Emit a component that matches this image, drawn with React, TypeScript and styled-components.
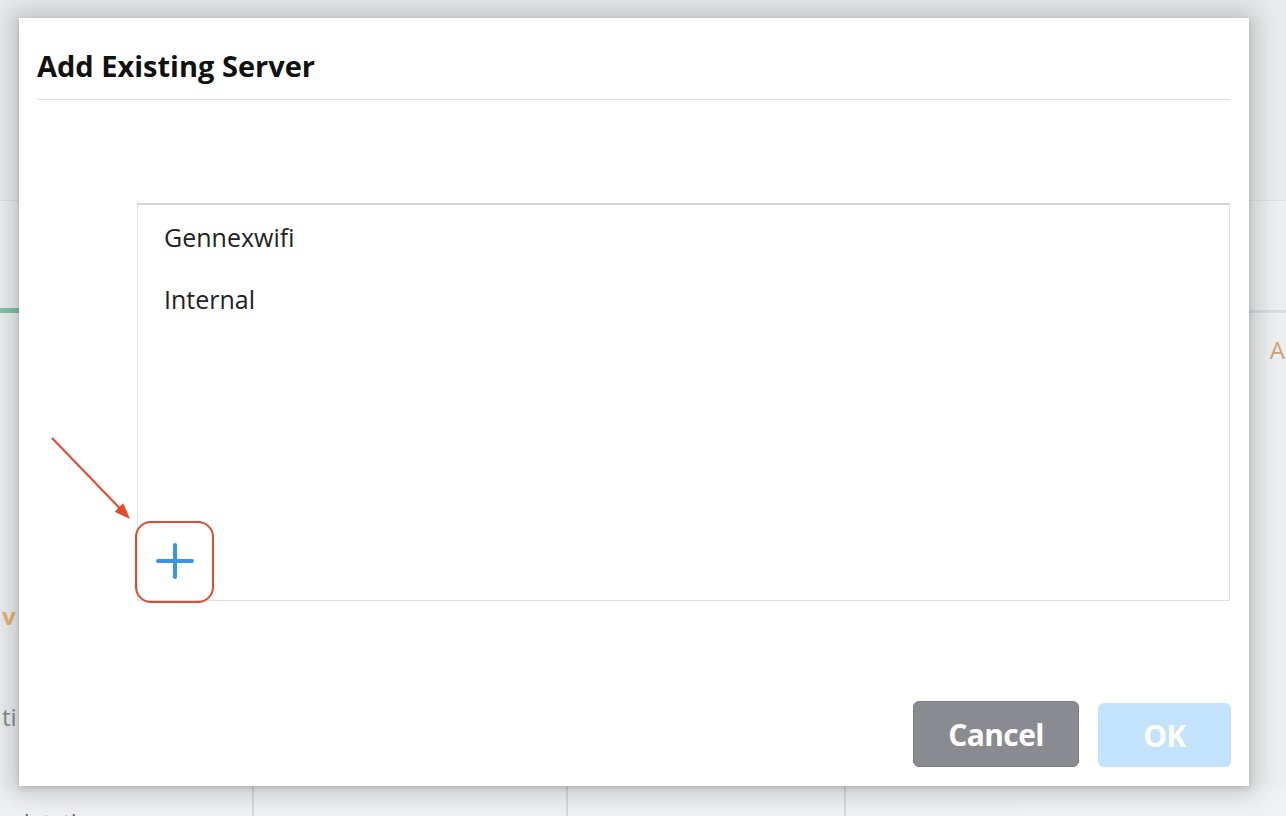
import React from "react";
import styled, { createGlobalStyle } from "styled-components";

const GlobalStyle = createGlobalStyle`
  html, body {
    margin: 0;
    padding: 0;
  }
  body {
    width: 1286px;
    height: 816px;
    overflow: hidden;
    background: #eceef0;
    font-family: "Open Sans", "Noto Sans", sans-serif;
  }
`;

const Screen = styled.div`
  position: relative;
  width: 1286px;
  height: 816px;
  overflow: hidden;
  background: #eceef0;
`;

// faded page behind the modal
const Backdrop = styled.div`
  display: flex;
  flex-direction: column;
  height: 816px;
  opacity: 0.75;
`;

const TopBand = styled.div`
  height: 200px;
  background: #e8eaec;
  border-bottom: 1px solid #d9dcdf;
`;

const TabRow = styled.div`
  height: 112px;
  display: flex;
  align-items: flex-end;
`;

const TabLine = styled.div<{ $active?: boolean; $w: string }>`
  width: ${(p) => p.$w};
  height: ${(p) => (p.$active ? "5px" : "3px")};
  background: ${(p) => (p.$active ? "#5cb795" : "#d3d6d9")};
  flex: ${(p) => (p.$active ? "0 0 auto" : "1 1 auto")};
`;

const BackContent = styled.div`
  flex: 1;
  display: flex;
  justify-content: space-between;
`;

const SideLabels = styled.div`
  display: flex;
  flex-direction: column;
  padding-top: 286px;
  gap: 68px;
  font-size: 24px;
  font-weight: 700;
`;

const SideLabel = styled.span<{ $c: string; $w?: number }>`
  color: ${(p) => p.$c};
  font-weight: ${(p) => p.$w ?? 700};
  padding-left: 2px;
  white-space: nowrap;
`;

const RightLabel = styled.span`
  padding-top: 20px;
  padding-right: 1px;
  font-size: 24px;
  color: #c48a4a;
`;

const TableRow = styled.div`
  height: 30px;
  display: grid;
  grid-template-columns: 254px 314px 278px 1fr;
  background: #f0f1f3;
`;

const TableCell = styled.div`
  border-right: 2px solid #cfd2d5;
  font-size: 22px;
  color: #333;
  padding: 20px 0 0 24px;
  overflow: hidden;
  white-space: nowrap;
  &:last-child {
    border-right: none;
  }
`;

// modal
const Dialog = styled.div`
  position: absolute;
  top: 18px;
  left: 19px;
  width: 1230px;
  height: 768px;
  background: #fff;
  box-shadow: 0 0 22px 8px rgba(0, 0, 0, 0.17), 0 2px 6px rgba(0, 0, 0, 0.14);
  display: flex;
  flex-direction: column;
  box-sizing: border-box;
  padding: 0 18px 19px 18px;
`;

const Header = styled.div`
  padding: 31px 0 16px;
  margin-right: 1px;
  border-bottom: 1px solid #dedede;
`;

const Title = styled.h2`
  margin: 0;
  font-size: 29px;
  line-height: 34px;
  font-weight: 700;
  color: #111;
`;

const Body = styled.div`
  flex: 1;
  display: flex;
  flex-direction: column;
  padding: 103px 1px 0 100px;
`;

const ListBox = styled.div`
  height: 398px;
  box-sizing: border-box;
  border: 1px solid #e2e2e2;
  border-top: 2px solid #d4d4d4;
  display: flex;
  flex-direction: column;
  padding-top: 1px;
`;

const ListItem = styled.div`
  height: 62px;
  display: flex;
  align-items: center;
  padding-left: 26px;
  font-size: 25px;
  color: #222;
`;

const PlusButton = styled.button`
  position: relative;
  margin: auto 0 19px 17px;
  width: 40px;
  height: 40px;
  padding: 0;
  border: none;
  background: transparent;
  display: flex;
  align-items: center;
  justify-content: center;
  cursor: pointer;
`;

const Highlight = styled.span`
  position: absolute;
  left: -20px;
  top: -20px;
  width: 79px;
  height: 82px;
  box-sizing: border-box;
  border: 2px solid #e64a2c;
  border-radius: 16px;
`;

const Arrow = styled.svg`
  position: absolute;
  left: -108px;
  top: -108px;
  overflow: visible;
`;

const Footer = styled.div`
  display: flex;
  justify-content: flex-end;
  align-items: flex-end;
  gap: 19px;
`;

const Button = styled.button<{ $variant: "cancel" | "ok" }>`
  height: ${(p) => (p.$variant === "cancel" ? "66px" : "64px")};
  width: ${(p) => (p.$variant === "cancel" ? "166px" : "133px")};
  border: ${(p) => (p.$variant === "cancel" ? "1px solid #7b7c82" : "none")};
  border-radius: 6px;
  background: ${(p) => (p.$variant === "cancel" ? "#8a8b91" : "#c3e2fb")};
  color: #fff;
  font-family: "Open Sans", sans-serif;
  font-size: 30px;
  font-weight: 700;
  letter-spacing: -0.6px;
  cursor: pointer;
`;

export default function App() {
  return (
    <Screen>
      <GlobalStyle />
      <Backdrop>
        <TopBand />
        <TabRow>
          <TabLine $active $w="19px" />
          <TabLine $w="auto" />
        </TabRow>
        <BackContent>
          <SideLabels>
            <SideLabel $c="#e1a04a">v</SideLabel>
            <SideLabel $c="#5d6b78" $w={400}>ti</SideLabel>
          </SideLabels>
          <RightLabel>A</RightLabel>
        </BackContent>
        <TableRow>
          <TableCell>lntati</TableCell>
          <TableCell />
          <TableCell />
          <TableCell />
        </TableRow>
      </Backdrop>

      <Dialog>
        <Header>
          <Title>Add Existing Server</Title>
        </Header>
        <Body>
          <ListBox>
            <ListItem>Gennexwifi</ListItem>
            <ListItem>Internal</ListItem>
            <PlusButton aria-label="Add server">
              <svg width="38" height="38" viewBox="0 0 38 38">
                <path d="M19 3v32M2 19h34" stroke="#3a95e6" strokeWidth="4" strokeLinecap="round" fill="none" />
              </svg>
              <Highlight />
              <Arrow width="90" height="92" viewBox="0 0 90 92">
                <line x1="5" y1="5" x2="73" y2="75.5" stroke="#e8472a" strokeWidth="2" />
                <polygon points="83,86 67.6,78.7 76.2,70.3" fill="#e8472a" />
              </Arrow>
            </PlusButton>
          </ListBox>
        </Body>
        <Footer>
          <Button $variant="cancel">Cancel</Button>
          <Button $variant="ok">OK</Button>
        </Footer>
      </Dialog>
    </Screen>
  );
}
